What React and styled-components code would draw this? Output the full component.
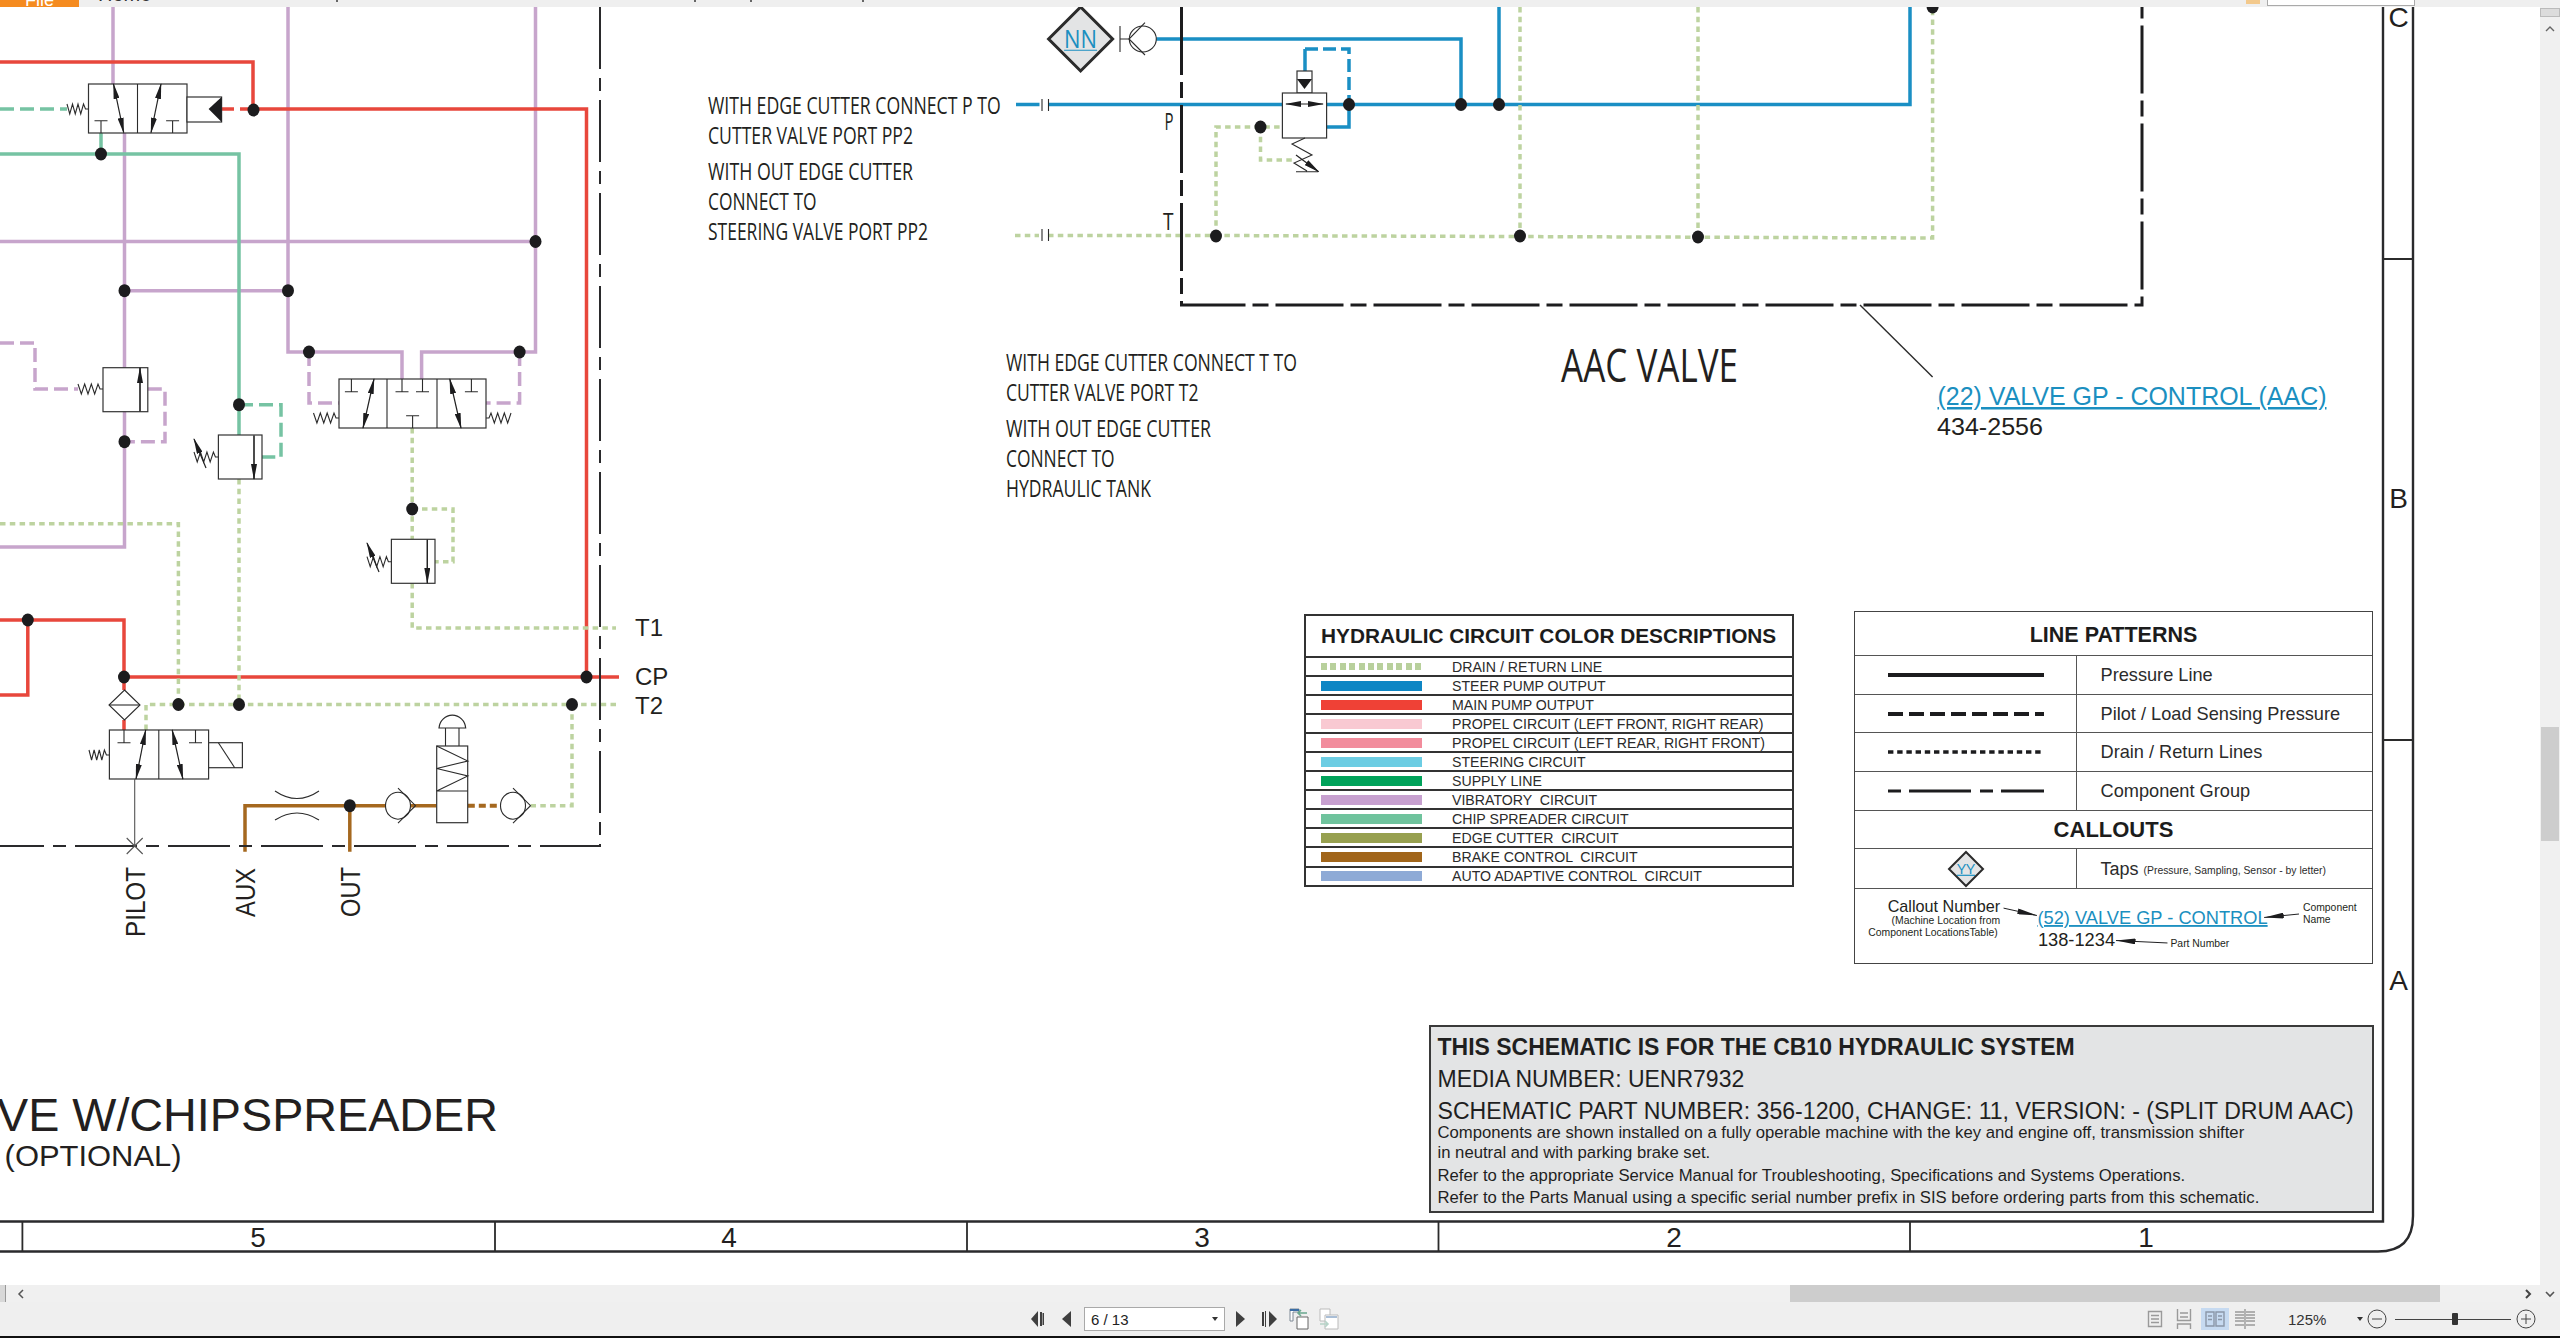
import React from 'react'
import styled, { createGlobalStyle } from 'styled-components'

const Global = createGlobalStyle`
  html, body { margin: 0; padding: 0; background: #fff; overflow: hidden; }
  body { font-family: "Liberation Sans", Arial, sans-serif; color: #231f20; }
`

const INK = '#2a2a2c'
const PURPLE = '#c7a5cc'
const RED = '#e8473c'
const CHIP = '#76c3a3'
const BLUE = '#1a8fc4'
const DRAIN = '#bdd3a0'
const BROWN = '#a5681f'
const LINK = '#1b8fc0'

const Page = styled.div`
  width: 2560px;
  height: 1338px;
  display: flex;
  flex-direction: column;
  background: #efefef;
  overflow: hidden;
`
const TopBar = styled.div`
  height: 7px;
  flex: none;
  display: flex;
  align-items: flex-start;
  background: #efefef;
  overflow: hidden;
  position: relative;
`
const FileTab = styled.div`
  width: 79px;
  height: 7px;
  background: #f58b1f;
  text-align: center;
  color: #fff;
  font-size: 18px;
  line-height: 0;
`
const TabLabel = styled.div`
  margin-left: 19px;
  font-size: 20px;
  line-height: 1px;
  color: #333;
  margin-top: -6px;
`
const TabTick = styled.div`
  width: 2px;
  height: 2px;
  margin-left: ${p => p.$gap}px;
  background: #666;
`
const SearchBox = styled.div`
  margin-left: auto;
  margin-right: 145px;
  width: 146px;
  height: 5px;
  background: #fff;
  border: 1px solid #aaa;
  border-top: 0;
`
const SearchIcon = styled.div`
  position: absolute;
  left: 2246px;
  top: 0;
  width: 14px;
  height: 4px;
  background: #f3c98c;
`
const Workspace = styled.div`
  flex: none;
  height: 1295px;
  display: flex;
`
const MainColumn = styled.div`
  width: 2540px;
  display: flex;
  flex-direction: column;
`
const Sheet = styled.div`
  position: relative;
  height: 1278px;
  background: #fff;
  overflow: hidden;
`
const Drawing = styled.svg`
  position: absolute;
  inset: 0;
  display: block;
`
const HScroll = styled.div`
  height: 17px;
  display: flex;
  align-items: stretch;
  background: #f0f0f0;
`
const CornerBox = styled.div`
  width: 5px;
  background: #d8d8d8;
  border-right: 1px solid #999;
`
const ScrollArrow = styled.svg`
  display: block;
  flex: none;
  align-self: center;
`
const HTrack = styled.div`
  flex: 1;
  display: flex;
  align-items: stretch;
  padding-left: 1760px;
  padding-right: 76px;
`
const HThumb = styled.div`
  flex: 1;
  background: #cdcdcd;
`
const VScroll = styled.div`
  width: 20px;
  display: flex;
  flex-direction: column;
  align-items: center;
  background: #f0f0f0;
  padding-top: 1px;
  box-sizing: border-box;
`
const VCap = styled.div`
  width: 20px;
  height: 9px;
  flex: none;
  background: #dcdcdc;
  border: 1px solid #bbb;
  box-sizing: border-box;
  margin-bottom: 8px;
`
const VThumb = styled.div`
  width: 18px;
  height: 114px;
  flex: none;
  margin-top: 694px;
  background: #cdcdcd;
`
const VFill = styled.div`
  flex: 1;
`
const VFoot = styled.div`
  flex: 0 0 4px;
`
const StatusBar = styled.div`
  height: 34px;
  flex: none;
  display: flex;
  align-items: center;
  background: #efefef;
  padding-left: 1031px;
  box-sizing: border-box;
`
const PageNav = styled.div`
  display: flex;
  align-items: center;
`
const NavIcon = styled.svg`
  display: block;
  flex: none;
  margin-left: ${p => p.$gap || 0}px;
`
const PageSelect = styled.div`
  width: 141px;
  height: 24px;
  margin-left: 13px;
  margin-right: 11px;
  box-sizing: border-box;
  border: 1px solid #a9a9a9;
  background: #fff;
  display: flex;
  align-items: center;
  justify-content: space-between;
  padding: 0 6px;
  font-family: "Liberation Sans", sans-serif;
  font-size: 15px;
  color: #222;
`
const Caret = styled.span`
  width: 0;
  height: 0;
  flex: none;
  border-left: 3.5px solid transparent;
  border-right: 3.5px solid transparent;
  border-top: 4px solid #333;
`
const ViewGroup = styled.div`
  display: flex;
  align-items: center;
  margin-left: 802px;
`
const ViewButton = styled.div`
  width: 28px;
  height: 22px;
  display: flex;
  align-items: center;
  justify-content: center;
  background: ${p => (p.$active ? '#c6daf1' : 'transparent')};
  margin-right: ${p => p.$gap || 0}px;
`
const ZoomGroup = styled.div`
  display: flex;
  align-items: center;
  margin-left: 29px;
  color: #333;
`
const ZoomValue = styled.span`
  width: 68.5px;
  font-size: 15px;
  font-family: "Liberation Sans", sans-serif;
`
const ZoomSlider = styled.div`
  width: 116px;
  height: 1px;
  margin: 0 5px 0 8px;
  background: #444;
  position: relative;
  &::after {
    content: '';
    position: absolute;
    left: 57px;
    top: -6px;
    width: 6px;
    height: 12px;
    background: #333;
    border-radius: 1px;
  }
`
const ZoomButton = styled.svg`
  display: block;
  flex: none;
  margin-left: ${p => p.$gap || 0}px;
`
const BlackStrip = styled.div`
  height: 2px;
  flex: none;
  background: #111;
`

/* legend block sits on top of the drawing sheet */
const LegendArea = styled.div`
  position: absolute;
  left: 1304px;
  top: 604px;
  width: 1069px;
  display: flex;
  flex-direction: column;
`
const LegendRow = styled.div`
  display: flex;
  justify-content: space-between;
  align-items: flex-start;
`
const ColorTable = styled.div`
  width: 490px;
  margin-top: 3px;
  border: 2px solid #333;
  box-sizing: border-box;
  background: #fff;
`
const ColorHeader = styled.div`
  height: 40px;
  box-sizing: border-box;
  padding-left: 15px;
  display: flex;
  align-items: center;
  font-weight: 700;
  font-size: 20.8px;
  color: #1c1c1c;
  white-space: nowrap;
`
const ColorRow = styled.div`
  height: 19.05px;
  box-sizing: border-box;
  border-top: 2px solid #333;
  display: flex;
  align-items: center;
  padding-left: 15px;
`
const Swatch = styled.div`
  width: 101px;
  flex: none;
  margin-right: 30px;
  background: ${p => (p.$dotted
    ? `repeating-linear-gradient(90deg, ${p.$color} 0 6px, transparent 6px 9.4px)`
    : p.$color)};
  height: ${p => (p.$dotted ? '7px' : '10px')};
`
const ColorName = styled.div`
  font-size: 14.15px;
  color: #2b2b2b;
  white-space: pre;
`
const PatternTable = styled.div`
  width: 519px;
  height: 353px;
  box-sizing: border-box;
  border: 1.5px solid #444;
  display: flex;
  flex-direction: column;
  background: #fff;
`
const PatternHeader = styled.div`
  height: ${p => p.$h}px;
  flex: none;
  box-sizing: border-box;
  border-bottom: 1.5px solid #555;
  padding-top: ${p => p.$pad || 0}px;
  display: flex;
  align-items: center;
  justify-content: center;
  font-weight: 700;
  font-size: ${p => p.$size}px;
  color: #1c1c1c;
`
const PatternRow = styled.div`
  height: ${p => p.$h}px;
  flex: none;
  box-sizing: border-box;
  border-bottom: 1.5px solid #555;
  display: grid;
  grid-template-columns: 222px 1fr;
`
const SampleCell = styled.div`
  display: flex;
  align-items: center;
  justify-content: center;
  border-right: 1.5px solid #555;
`
const PatternLabel = styled.div`
  display: flex;
  align-items: center;
  padding-left: 23.5px;
  padding-top: 1px;
  font-size: 18.2px;
  color: #2b2b2b;
  white-space: nowrap;
`
const TapNote = styled.span`
  font-size: 10.4px;
  margin-left: 5px;
  margin-top: 3px;
`
const TapLabel = styled.span`
  font-size: 18px;
`
const KeyDrawing = styled.svg`
  display: block;
  flex: 1;
`
const NoteBox = styled.div`
  align-self: flex-end;
  width: 945px;
  height: 188px;
  margin-top: 61px;
  margin-right: -1px;
  box-sizing: border-box;
  border: 2.5px solid #3a3a3a;
  background: #e3e4e5;
  padding: 4.5px 0 0 6.5px;
  display: flex;
  flex-direction: column;
`
const NoteLine = styled.div`
  font-size: ${p => p.$size}px;
  font-weight: ${p => (p.$bold ? 700 : 400)};
  line-height: ${p => p.$lh}px;
  height: ${p => p.$lh}px;
  flex: none;
  color: #1f1f1f;
  white-space: nowrap;
`

/* text drawn on the sheet */
const SheetText = styled.text`
  font-family: "Liberation Sans", Arial, sans-serif;
  fill: ${p => p.$color || '#231f20'};
`
const NoteText = styled.text`
  font-family: "Open Sans", sans-serif;
  fill: #231f20;
`
const TapLink = styled(NoteText)`
  fill: ${LINK};
`

const Wire = ({ d, color, w = 3.5, dash }) => (
  <path d={d} fill="none" stroke={color} strokeWidth={w} strokeDasharray={dash} strokeLinejoin="miter" />
)
const Dot = ({ x, y, r = 6 }) => <ellipse cx={x} cy={y} rx={r} ry={r + 0.5} fill="#1c1c1e" />
const Box = ({ x, y, w, h, fill = '#fff' }) => (
  <rect x={x} y={y} width={w} height={h} fill={fill} stroke="#333" strokeWidth="1.2" />
)
const Thin = ({ d, w = 1.1, c = '#2b2b2b' }) => <path d={d} fill="none" stroke={c} strokeWidth={w} />
const Flow = ({ x1, y1, x2, y2, both }) => (
  <line x1={x1} y1={y1} x2={x2} y2={y2} stroke="#222" strokeWidth="1.2"
    markerEnd="url(#head)" markerStart={both ? 'url(#headStart)' : undefined} />
)
const Stop = ({ x, y, stem, up }) => (
  <Thin d={`M${x - 6.5} ${y}H${x + 6.5}M${x} ${y}V${up ? y + stem : y - stem}`} />
)
// spring from x0 to x1 on a horizontal wire
const Spring = ({ x0, x1, y }) => {
  const n = 3
  const step = (x1 - x0 - 5) / n
  let d = `M${x0} ${y - 5}`
  for (let i = 1; i <= n; i++) {
    d += `L${x0 + step * i - step / 2} ${y + 5}L${x0 + step * i} ${y - 5}`
  }
  d += `L${x1 - 3} ${y}H${x1}`
  return <Thin d={d} />
}
const CheckValve = ({ cx, cy, r = 12.5, tip = 17.5 }) => (
  <g>
    <ellipse cx={cx} cy={cy} rx={r} ry={r + 1} fill="#fff" stroke="#2b2b2b" strokeWidth="1.1" />
    <Thin d={`M${cx} ${cy - 17.5}L${cx + tip} ${cy}L${cx} ${cy + 17.5}`} />
  </g>
)
const Tap = ({ cx, cy, r, text, size, width }) => (
  <g>
    <path d={`M${cx} ${cy - r}L${cx + r} ${cy}L${cx} ${cy + r}L${cx - r} ${cy}Z`} fill="#e3e4e5" stroke="#2b2b2b" strokeWidth={r > 20 ? 3 : 2} />
    <TapLink x={cx} y={cy + size * 0.36} textAnchor="middle" fontSize={size}
      textLength={width} lengthAdjust="spacingAndGlyphs">{text}</TapLink>
    <line x1={cx - width / 2} x2={cx + width / 2} y1={cy + size * 0.45} y2={cy + size * 0.45} stroke={LINK} strokeWidth="1.2" />
  </g>
)
const NL = ({ x, y, w, size = 24, children }) => (
  <NoteText x={x} y={y} fontSize={size} textLength={w} lengthAdjust="spacingAndGlyphs">{children}</NoteText>
)
const Rotated = ({ x, y, w, children }) => (
  <SheetText x={0} y={0} fontSize="27" transform={`translate(${x} ${y}) rotate(-90)`} textLength={w} lengthAdjust="spacingAndGlyphs">{children}</SheetText>
)

const BOX_DASH = '68 7 16 7'
const LOWER_DASH = '62 9 13 9'
const DRAIN_DASH = '5.5 4.3'
const PILOT_DASH = '14 6'

const Schematic = () => (
  <Drawing width="2540" height="1278" viewBox="0 7 2540 1278">
    <defs>
      <marker id="head" viewBox="0 0 16 6" refX="15" refY="3" markerWidth="16" markerHeight="6" orient="auto" markerUnits="userSpaceOnUse">
        <path d="M0 0L16 3L0 6Z" fill="#1c1c1e" />
      </marker>
      <marker id="headStart" viewBox="0 0 16 6" refX="1" refY="3" markerWidth="16" markerHeight="6" orient="auto" markerUnits="userSpaceOnUse">
        <path d="M16 0L0 3L16 6Z" fill="#1c1c1e" />
      </marker>
    </defs>

    {/* sheet frame and zones */}
    <Wire d="M0 1221.5H2383V7" color={INK} w="2.4" />
    <Wire d="M0 1251.5H2378Q2413 1251.5 2413 1216V7" color={INK} w="2.4" />
    <Thin d="M22.4 1221.5V1251.5M495 1221.5V1251.5M967 1221.5V1251.5M1438.5 1221.5V1251.5M1910 1221.5V1251.5" w="1.8" />
    <Thin d="M2383 259H2413M2383 740H2413" w="2" />
    {[['5', 258], ['4', 729], ['3', 1202], ['2', 1674], ['1', 2146]].map(([n, x]) => (
      <SheetText key={n} x={x} y="1246.5" fontSize="28" textAnchor="middle">{n}</SheetText>
    ))}
    {[['C', 27], ['B', 508], ['A', 990]].map(([n, y]) => (
      <SheetText key={n} x="2398.5" y={y} fontSize="28" textAnchor="middle">{n}</SheetText>
    ))}

    {/* vibratory lines */}
    <Wire d="M113 7V84M124.5 133V547H0M288 7V352H402V379M535.5 7V352H421.6V379M0 241.5H535.5M124.5 290.7H288" color={PURPLE} />
    <Wire d="M0 343H35V389H78M147.8 389H165V441.7H124.5M309 352V403H339M519.6 352V403H486" color={PURPLE} dash={PILOT_DASH} />

    {/* chip spreader lines */}
    <Wire d="M0 154H239V435M101 133V154" color={CHIP} />
    <Wire d="M0 109H67" color={CHIP} dash={PILOT_DASH} />
    <Wire d="M239 404.7H281V457H262" color={CHIP} dash={PILOT_DASH} />

    {/* main pump lines */}
    <Wire d="M0 62H253V109H586.5V677" color={RED} />
    <Wire d="M221 109H253" color={RED} dash="13 6" />
    <Wire d="M0 620H124V690M27.8 620V695H0M124 677H619M124 720V730" color={RED} />

    {/* drain lines */}
    <Wire d="M412.2 428V539M412.2 509H453V561.7H435M412.2 583V628H616" color={DRAIN} dash={DRAIN_DASH} />
    <Wire d="M0 523.7H178.4V704.5M239 479V704.5M146 730V704.5H619M572 704.5V805.7H530.6" color={DRAIN} dash={DRAIN_DASH} />

    {/* brake lines */}
    <Wire d="M245 851.7V805.7H436.7M349.8 805.7V851.7" color={BROWN} />
    <Wire d="M467.8 805.7H500" color={BROWN} dash="7 4" w="4" />

    {/* component group boundary, left */}
    <Wire d="M600 7V846H0" color={INK} w="2" dash={LOWER_DASH} />

    {/* steering side */}
    <Wire d="M1016 104.5H1039.5M1048.5 104.5H1910V7M1156 39H1461V104.5M1499 7V104.5M1326.6 127H1349V104.5M1305 71V49" color={BLUE} />
    <Wire d="M1305 49H1349V104" color={BLUE} dash="13 5" />
    <Wire d="M1015 235.5H1039M1048 235.5H1216L1932.6 238V7M1216 235.5V127H1282M1260.5 127V160H1296M1520 7V236M1698 7V237" color={DRAIN} dash={DRAIN_DASH} />
    <Thin d="M1042 99V111M1048.5 99V111M1042 229V241M1048.5 229V241" />
    <Wire d="M1181.5 7V305H2142V7" color="#1c1c1e" w="3" dash={BOX_DASH} />
    <Thin d="M1860 305L1932.6 377" w="1.4" />

    {/* top left selector valve */}
    <Box x="88.5" y="84" w="98.5" h="49" />
    <Thin d="M137.5 84V133" />
    <Flow x1="123.7" y1="132.7" x2="113.5" y2="84" both />
    <Flow x1="151" y1="132.7" x2="161" y2="84" both />
    <Stop x={101} y={120.7} stem={12.3} up />
    <Stop x={172.6} y={120.7} stem={12.3} up />
    <Box x="187" y="97" w="34.6" h="25" />
    <path d="M208.6 109L221.6 97V122Z" fill="#1c1c1e" />
    <Spring x0={67} x1={88.5} y={109} />

    {/* three position valve */}
    <Box x="339" y="379" w="147" h="49" />
    <Thin d="M387 379V428M437 379V428" />
    <Flow x1="363" y1="428" x2="374" y2="379" both />
    <Flow x1="461" y1="428" x2="449.8" y2="379" both />
    <Stop x={351.4} y={391.7} stem={12.7} />
    <Stop x={402} y={391.7} stem={12.7} />
    <Stop x={422.5} y={391.7} stem={12.7} />
    <Stop x={471.4} y={391.7} stem={12.7} />
    <Stop x={412.6} y={415.7} stem={12.3} up />
    <Spring x0={313.5} x1={339} y={418} />
    <g transform="translate(825 0) scale(-1 1)"><Spring x0={314} x1={339} y={418} /></g>

    {/* sequence valves */}
    <Box x="103" y="367.7" w="44.8" h="44" />
    <Thin d="M140 367.7V411.7" />
    <Flow x1="140" y1="411" x2="140" y2="368" />
    <Spring x0={78} x1={103} y={389} />

    <Box x="218.4" y="435" w="43.6" h="44" />
    <Thin d="M254 435V479" />
    <Flow x1="254" y1="436" x2="254" y2="479" />
    <Spring x0={194} x1={218.4} y={457} />
    <Flow x1="206" y1="468" x2="194" y2="439" />

    <Box x="391.4" y="539.3" w="43.6" h="44" />
    <Thin d="M427.3 539.3V583.3" />
    <Flow x1="427.3" y1="540" x2="427.3" y2="583" />
    <Spring x0={367} x1={391.4} y={561.7} />
    <Flow x1="379" y1="572" x2="367" y2="543" />

    {/* pilot filter and valve */}
    <path d="M124.5 690L140 705L124.5 720L109 705Z" fill="#fff" stroke="#2b2b2b" strokeWidth="1.1" />
    <Thin d="M109 705H140" />
    <Box x="109.4" y="730" w="99.2" h="49" />
    <Thin d="M158.8 730V779" />
    <Flow x1="136" y1="779" x2="145.7" y2="730" both />
    <Flow x1="182.9" y1="779" x2="172.2" y2="730" both />
    <Stop x={124} y={742.7} stem={12.7} />
    <Stop x={195.5} y={742.7} stem={12.7} />
    <Box x="208.6" y="742.7" w="33.8" h="25" />
    <Thin d="M218.4 742.7L234.7 767.7" />
    <Spring x0={89} x1={109.4} y={755} />
    <Thin d="M134.7 779V846M126.7 838L142.7 854M126.7 854L142.7 838" c="#555" />

    {/* orifice, checks and manual valve */}
    <path d="M275 791Q297 806 319 791M275 820Q297 806 319 820" fill="none" stroke="#2b2b2b" strokeWidth="1.1" />
    <CheckValve cx={398} cy={805.7} />
    <CheckValve cx={513} cy={805.7} />
    <path d="M439 728A13.4 14 0 0 1 465.7 728V728Z" fill="#fff" stroke="#2b2b2b" strokeWidth="1.2" />
    <Thin d="M445.5 728V746M459 728V746" />
    <Box x="436.7" y="746" w="31" h="76.7" />
    <Thin d="M436.7 746L467.8 761L436.7 768.5L467.8 776L436.7 791M436.7 791H467.8" />

    {/* cutter valve */}
    <Tap cx={1080.6} cy={39} r={32} text="NN" size={25} width={33} />
    <Thin d="M1120 26V52M1120 39H1129" />
    <ellipse cx="1142.8" cy="39" rx="13.5" ry="13" fill="#fff" stroke="#2b2b2b" strokeWidth="1.1" />
    <Thin d="M1145 22.7L1129 39L1145 55" />
    <Box x="1297" y="71" w="15" h="22" />
    <path d="M1297 79H1312L1304.5 89Z" fill="#1c1c1e" />
    <Box x="1282.4" y="93" w="44.2" h="45" />
    <Flow x1="1286" y1="104" x2="1323" y2="104" both />
    <Thin d="M1305 138L1292 144L1312 155L1294 163L1307 171M1296 171.7H1318" />
    <Flow x1="1296" y1="155" x2="1318.6" y2="171.7" />

    {/* junctions */}
    {[[253.5, 110], [101, 154], [535.5, 241.5], [124.5, 290.7], [288, 290.7], [309, 352], [519.6, 352], [239, 404.7],
      [124.5, 441.7], [412.2, 509], [27.8, 620], [124, 677], [586.5, 677], [178.4, 704.5], [239, 704.5], [572, 704.5], [349.8, 805.7],
      [1349, 104.5], [1461, 104.5], [1499, 104.5], [1260.5, 127], [1216, 236], [1520, 236], [1698, 237], [1932.6, 7]].map(([x, y]) => (
      <Dot key={`${x}-${y}`} x={x} y={y} />
    ))}

    {/* labels */}
    <NL x="708" y="114" w="292.7">WITH EDGE CUTTER CONNECT P TO</NL>
    <NL x="708" y="144" w="205">CUTTER VALVE PORT PP2</NL>
    <NL x="708" y="179.5" w="205">WITH OUT EDGE CUTTER</NL>
    <NL x="708" y="209.5" w="108.5">CONNECT TO</NL>
    <NL x="708" y="239.5" w="220">STEERING VALVE PORT PP2</NL>
    <NL x="1006" y="371" w="291">WITH EDGE CUTTER CONNECT T TO</NL>
    <NL x="1006" y="401" w="192.5">CUTTER VALVE PORT T2</NL>
    <NL x="1006" y="436.5" w="205">WITH OUT EDGE CUTTER</NL>
    <NL x="1006" y="466.5" w="108.6">CONNECT TO</NL>
    <NL x="1006" y="496.5" w="145">HYDRAULIC TANK</NL>
    <NL x="1164.5" y="130" w="9">P</NL>
    <NL x="1163" y="230" w="10.5">T</NL>
    <NL x="1561" y="382" w="177" size="45">AAC VALVE</NL>

    <SheetText x="635" y="636" fontSize="24">T1</SheetText>
    <SheetText x="635" y="685" fontSize="24">CP</SheetText>
    <SheetText x="635" y="714" fontSize="24">T2</SheetText>
    <Rotated x="145" y="937" w="70">PILOT</Rotated>
    <Rotated x="255" y="917" w="49">AUX</Rotated>
    <Rotated x="360" y="917" w="50">OUT</Rotated>

    <SheetText x="1937.5" y="405" fontSize="25" $color={LINK} textLength="389" lengthAdjust="spacingAndGlyphs" textDecoration="underline">(22) VALVE GP - CONTROL (AAC)</SheetText>
    <SheetText x="1937" y="435" fontSize="24" textLength="106" lengthAdjust="spacingAndGlyphs">434-2556</SheetText>

    <SheetText x="-3" y="1131" fontSize="46" textLength="501" lengthAdjust="spacingAndGlyphs">VE W/CHIPSPREADER</SheetText>
    <SheetText x="4.6" y="1166" fontSize="30" textLength="177" lengthAdjust="spacingAndGlyphs">(OPTIONAL)</SheetText>
  </Drawing>
)

const colors = [
  ['DRAIN / RETURN LINE', '#b8d09c', true],
  ['STEER PUMP OUTPUT', '#0e86c4'],
  ['MAIN PUMP OUTPUT', '#ef4136'],
  ['PROPEL CIRCUIT (LEFT FRONT, RIGHT REAR)', '#f9c9d2'],
  ['PROPEL CIRCUIT (LEFT REAR, RIGHT FRONT)', '#f28c9c'],
  ['STEERING CIRCUIT', '#6ccde3'],
  ['SUPPLY LINE', '#00a25a'],
  ['VIBRATORY  CIRCUIT', '#c7a0cf'],
  ['CHIP SPREADER CIRCUIT', '#6fc39d'],
  ['EDGE CUTTER  CIRCUIT', '#97a050'],
  ['BRAKE CONTROL  CIRCUIT', '#a1651a'],
  ['AUTO ADAPTIVE CONTROL  CIRCUIT', '#8eaad6'],
]

const patterns = [
  ['Pressure Line', 4, undefined, 39],
  ['Pilot / Load Sensing Pressure', 4, '15 6', 38.4],
  ['Drain / Return Lines', 3.5, '5.4 3.8', 39],
  ['Component Group', 3, '13 8 62 9', 39],
]

const LineSample = ({ w, dash }) => (
  <svg width="156" height="8">
    <line x1="0" x2="156" y1="4" y2="4" stroke="#1c1c1e" strokeWidth={w} strokeDasharray={dash} />
  </svg>
)

const CalloutKey = () => (
  <KeyDrawing viewBox="1854 887 519 75">
    <defs>
      <marker id="keyHead" viewBox="0 0 20 6" refX="20" refY="3" markerWidth="20" markerHeight="6" orient="auto" markerUnits="userSpaceOnUse">
        <path d="M0 0L20 3L0 6Z" fill="#1c1c1e" />
      </marker>
    </defs>
    <SheetText x="1998" y="910" textAnchor="end" fontSize="16.5">Callout Number</SheetText>
    <SheetText x="1998" y="923" textAnchor="end" fontSize="10.6">(Machine Location from</SheetText>
    <SheetText x="1995.5" y="935" textAnchor="end" fontSize="10.6">Component LocationsTable)</SheetText>
    <SheetText x="2036" y="922.7" fontSize="18.6" $color={LINK} textDecoration="underline">(52) VALVE GP - CONTROL</SheetText>
    <SheetText x="2036.5" y="945" fontSize="18.6">138-1234</SheetText>
    <SheetText x="2306.5" y="909" fontSize="10.6">Component</SheetText>
    <SheetText x="2306.5" y="921.7" fontSize="10.6">Name</SheetText>
    <SheetText x="2171.5" y="945.7" fontSize="10.6">Part Number</SheetText>
    <line x1="2001.5" y1="906.5" x2="2035.5" y2="914" stroke="#1c1c1e" strokeWidth="1" markerEnd="url(#keyHead)" />
    <line x1="2302.5" y1="912.5" x2="2267" y2="916" stroke="#1c1c1e" strokeWidth="1" markerEnd="url(#keyHead)" />
    <line x1="2168.5" y1="942" x2="2116" y2="939.5" stroke="#1c1c1e" strokeWidth="1" markerEnd="url(#keyHead)" />
  </KeyDrawing>
)

const ColorLegend = () => (
  <ColorTable>
    <ColorHeader>HYDRAULIC CIRCUIT COLOR DESCRIPTIONS</ColorHeader>
    {colors.map(([name, color, dotted]) => (
      <ColorRow key={name}>
        <Swatch $color={color} $dotted={dotted} />
        <ColorName>{name}</ColorName>
      </ColorRow>
    ))}
  </ColorTable>
)

const PatternLegend = () => (
  <PatternTable>
    <PatternHeader $h={44} $size={21.5} $pad={4}>LINE PATTERNS</PatternHeader>
    {patterns.map(([label, w, dash, h]) => (
      <PatternRow key={label} $h={h}>
        <SampleCell><LineSample w={w} dash={dash} /></SampleCell>
        <PatternLabel>{label}</PatternLabel>
      </PatternRow>
    ))}
    <PatternHeader $h={37.5} $size={22}>CALLOUTS</PatternHeader>
    <PatternRow $h={40.5}>
      <SampleCell>
        <svg width="40" height="38" viewBox="1945 848 40 38">
          <Tap cx={1965} cy={867} r={17} text="YY" size={14} width={18} />
        </svg>
      </SampleCell>
      <PatternLabel>
        <TapLabel>Taps</TapLabel>
        <TapNote>(Pressure, Sampling, Sensor - by letter)</TapNote>
      </PatternLabel>
    </PatternRow>
    <CalloutKey />
  </PatternTable>
)

const Notes = () => (
  <NoteBox>
    <NoteLine $bold $size={23} $lh={30}>THIS SCHEMATIC IS FOR THE CB10 HYDRAULIC SYSTEM</NoteLine>
    <NoteLine $size={23} $lh={34}>MEDIA NUMBER: UENR7932</NoteLine>
    <NoteLine $size={23.1} $lh={30.6}>SCHEMATIC PART NUMBER: 356-1200, CHANGE: 11, VERSION: - (SPLIT DRUM AAC)</NoteLine>
    <NoteLine $size={16.7} $lh={14.2}>Components are shown installed on a fully operable machine with the key and engine off, transmission shifter</NoteLine>
    <NoteLine $size={16.7} $lh={26.6}>in neutral and with parking brake set.</NoteLine>
    <NoteLine $size={16.7} $lh={18}>Refer to the appropriate Service Manual for Troubleshooting, Specifications and Systems Operations.</NoteLine>
    <NoteLine $size={16.7} $lh={25.4}>Refer to the Parts Manual using a specific serial number prefix in SIS before ordering parts from this schematic.</NoteLine>
  </NoteBox>
)

const PageIcon = ({ kind }) => (
  <svg width="20" height="20" viewBox="0 0 20 20" fill="none" stroke="#9a9a9a" strokeWidth="1.4">
    {kind === 'single' && <path d="M3.5 2.5H16.5V17.5H3.5ZM6 6.5H14M6 10H14M6 13.5H14" />}
    {kind === 'scroll' && <path d="M3.5 0V11.5H16.5V0M6 4H14M6 8H14M3.5 20V15H16.5V20" />}
    {kind === 'facing' && <path d="M1 3H9V17H1ZM11 3H19V17H11ZM3 7H7M3 10.5H7M13 7H17M13 10.5H17" stroke="#8b97a8" />}
    {kind === 'cont' && <path d="M0 3H9M0 6H9M0 9H9M0 12H9M11 3H20M11 6H20M11 9H20M11 12H20M10 0V20M0 16H9M11 16H20" />}
  </svg>
)

const Toolbar = () => (
  <StatusBar>
    <PageNav>
      <NavIcon width="14" height="16" viewBox="0 0 14 16"><path d="M7 0V16L0 8ZM9 1H11V15H9ZM11.5 2H13V14H11.5Z" fill="#3f3f3f" /></NavIcon>
      <NavIcon $gap={17} width="9" height="16" viewBox="0 0 9 16"><path d="M9 0V16L0 8Z" fill="#3f3f3f" /></NavIcon>
      <PageSelect>6 / 13<Caret /></PageSelect>
      <NavIcon width="9" height="16" viewBox="0 0 9 16"><path d="M0 0V16L9 8Z" fill="#3f3f3f" /></NavIcon>
      <NavIcon $gap={17} width="15" height="16" viewBox="0 0 15 16"><path d="M0 1H2V15H0ZM3 0H4V16H3ZM7 0V16L15 8Z" fill="#3f3f3f" /></NavIcon>
      <NavIcon $gap={12} width="20" height="22" viewBox="0 0 20 22" fill="none">
        <path d="M1 1H10V4H4V13H1Z" fill="#fff" stroke="#7d8894" /><path d="M1 1H10V3H1Z" fill="#3c6ea5" />
        <path d="M8 9H19V21H8Z" fill="#fff" stroke="#666" /><path d="M9 5H18M12 2L9 5L12 8" stroke="#6aa88f" strokeWidth="1.6" />
      </NavIcon>
      <NavIcon $gap={10} width="20" height="22" viewBox="0 0 20 22" fill="none">
        <path d="M1 1H11V13H1Z" fill="#fff" stroke="#bbb" /><path d="M6 7H19V21H6Z" fill="#fff" stroke="#bbb" /><path d="M7 8H18V10H7Z" fill="#a9bed6" />
        <path d="M1 16H9M6 13L9 16L6 19" stroke="#b6d3c8" strokeWidth="1.6" />
      </NavIcon>
    </PageNav>
    <ViewGroup>
      <ViewButton $gap={1}><PageIcon kind="single" /></ViewButton>
      <ViewButton $gap={3}><PageIcon kind="scroll" /></ViewButton>
      <ViewButton $active $gap={2}><PageIcon kind="facing" /></ViewButton>
      <ViewButton><PageIcon kind="cont" /></ViewButton>
    </ViewGroup>
    <ZoomGroup>
      <ZoomValue>125%</ZoomValue>
      <Caret />
      <ZoomButton $gap={4.5} width="20" height="20" viewBox="0 0 20 20" fill="none" stroke="#444">
        <circle cx="10" cy="10" r="9" /><path d="M5 10H15" />
      </ZoomButton>
      <ZoomSlider />
      <ZoomButton width="20" height="20" viewBox="0 0 20 20" fill="none" stroke="#444">
        <circle cx="10" cy="10" r="9" /><path d="M5 10H15M10 5V15" />
      </ZoomButton>
    </ZoomGroup>
  </StatusBar>
)

const App = () => (
  <Page>
    <Global />
    <TopBar>
      <FileTab>File</FileTab>
      <TabLabel>Home</TabLabel>
      <TabTick $gap={185} />
      <TabTick $gap={356} />
      <TabTick $gap={54} />
      <TabTick $gap={110} />
      <SearchIcon />
      <SearchBox />
    </TopBar>
    <Workspace>
      <MainColumn>
        <Sheet>
          <Schematic />
          <LegendArea>
            <LegendRow>
              <ColorLegend />
              <PatternLegend />
            </LegendRow>
            <Notes />
          </LegendArea>
        </Sheet>
        <HScroll>
          <CornerBox />
          <ScrollArrow width="24" height="12" viewBox="0 0 24 12" fill="none" stroke="#555" strokeWidth="1.5"><path d="M17 2L13 6L17 10" /></ScrollArrow>
          <HTrack><HThumb /></HTrack>
          <ScrollArrow width="24" height="12" viewBox="0 0 24 12" fill="none" stroke="#444" strokeWidth="2"><path d="M10 2L14 6L10 10" /></ScrollArrow>
        </HScroll>
      </MainColumn>
      <VScroll>
        <VCap />
        <ScrollArrow width="12" height="8" viewBox="0 0 12 8" fill="none" stroke="#666" strokeWidth="1.4"><path d="M2 6L6 2L10 6" /></ScrollArrow>
        <VThumb />
        <VFill />
        <ScrollArrow width="12" height="8" viewBox="0 0 12 8" fill="none" stroke="#555" strokeWidth="1.6"><path d="M2 2L6 6L10 2" /></ScrollArrow>
        <VFoot />
      </VScroll>
    </Workspace>
    <Toolbar />
    <BlackStrip />
  </Page>
)

export default App
